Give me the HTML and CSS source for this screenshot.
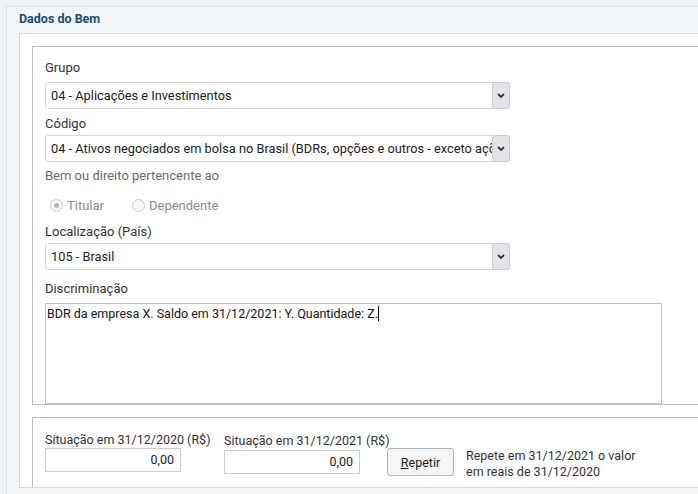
FILE: index.html
```html
<!DOCTYPE html>
<html lang="pt-BR">
<head>
<meta charset="utf-8">
<title>Dados do Bem</title>
<link rel="stylesheet" href="styles.css">
</head>
<body>
<div class="page">
  <div class="panel">
    <div class="panel-header">Dados do Bem</div>
    <div class="panel-body">
      <div class="fieldset fs-main">
        <div class="label label-first">Grupo</div>
        <div class="select">
          <span class="select-value">04 - Aplicações e Investimentos</span>
          <span class="select-arrow"><svg width="8" height="5" viewBox="0 0 8 5"><polyline points="1,1 4,4 7,1" fill="none" stroke="#333" stroke-width="1.8"/></svg></span>
        </div>
        <div class="label">Código</div>
        <div class="select">
          <span class="select-value">04 - Ativos negociados em bolsa no Brasil (BDRs, opções e outros - exceto ações)</span>
          <span class="select-arrow"><svg width="8" height="5" viewBox="0 0 8 5"><polyline points="1,1 4,4 7,1" fill="none" stroke="#333" stroke-width="1.8"/></svg></span>
        </div>
        <div class="label label-muted">Bem ou direito pertencente ao</div>
        <div class="radio-row">
          <label class="radio"><span class="radio-dot checked"></span>Titular</label>
          <label class="radio"><span class="radio-dot"></span>Dependente</label>
        </div>
        <div class="label label-loc">Localização (País)</div>
        <div class="select">
          <span class="select-value">105 - Brasil</span>
          <span class="select-arrow"><svg width="8" height="5" viewBox="0 0 8 5"><polyline points="1,1 4,4 7,1" fill="none" stroke="#333" stroke-width="1.8"/></svg></span>
        </div>
        <div class="label label-disc">Discriminação</div>
        <div class="textarea">BDR da empresa X. Saldo em 31/12/2021: Y. Quantidade: Z.<span class="caret"></span></div>
      </div>
      <div class="fieldset fs-values">
        <div class="value-col col-2020">
          <div class="value-label">Situação em 31/12/2020 (R$)</div>
          <div class="value-input">0,00</div>
        </div>
        <div class="value-col col-2021">
          <div class="value-label">Situação em 31/12/2021 (R$)</div>
          <div class="value-input">0,00</div>
        </div>
        <button class="btn" type="button"><u>R</u>epetir</button>
        <div class="hint">Repete em 31/12/2021 o valor<br>em reais de 31/12/2020</div>
      </div>
    </div>
  </div>
</div>
</body>
</html>
```
FILE: styles.css
```css
html, body {
  margin: 0;
  padding: 0;
}
body {
  background: #eef1f5;
  font-family: Roboto, "Liberation Sans", Arial, sans-serif;
  font-size: 13px;
  color: #333;
  overflow: hidden;
  width: 698px;
  height: 494px;
}
.page {
  padding: 6px 0 0 6px;
}
.panel {
  width: 740px;
  background: #f1f4f8;
  border-top: 1px solid #dde1e7;
  border-left: 1px solid #dde1e7;
  padding-left: 12px;
  height: 500px;
}
.panel-header {
  height: 26px;
  box-sizing: border-box;
  padding-top: 4px;
  line-height: 16px;
  font-size: 12.5px;
  font-weight: bold;
  color: #1f4a76;
}
.panel-body {
  background: #fff;
  border: 1px solid #d6dae1;
  height: 455px;
  box-sizing: border-box;
  overflow: hidden;
  padding: 12px 0 0 12px;
}
.fieldset {
  border: 1px solid #b9c0ca;
  padding: 13px 12px 0 12px;
}
.fs-main {
  padding-bottom: 0;
  margin-bottom: 12px;
}
.label {
  line-height: 16px;
  margin: 7px 0 3px;
  color: #333;
}
.label-first {
  margin-top: 0;
  margin-bottom: 6px;
}
.label-muted {
  color: #6b6b6b;
  margin-top: 6px;
  margin-bottom: 0;
}
.label-loc {
  margin-top: 8px;
}
.label-disc {
  margin-top: 11px;
  margin-bottom: 6px;
}
.select {
  width: 465px;
  height: 27px;
  box-sizing: border-box;
  border: 1px solid #d2d6dc;
  border-radius: 3px;
  background: #fff;
  display: flex;
  align-items: stretch;
}
.select-value {
  flex: 1;
  min-width: 0;
  overflow: hidden;
  white-space: nowrap;
  line-height: 25px;
  padding-left: 5px;
  font-size: 12.8px;
  color: #1c1c1c;
}
.select-arrow {
  width: 18px;
  margin: -1px -1px -1px 0;
  box-sizing: border-box;
  border: 1px solid #c6cad1;
  border-radius: 3px;
  background: #e2e4e9;
  display: flex;
  align-items: center;
  justify-content: center;
}
.radio-row {
  margin-top: 11px;
  height: 21px;
  display: flex;
  align-items: center;
}
.radio {
  display: inline-flex;
  align-items: center;
  color: #8c8c8c;
  margin-right: 23px;
}
.radio-dot {
  width: 13px;
  height: 13px;
  box-sizing: border-box;
  border: 1px solid #cacaca;
  border-radius: 50%;
  background: #f6f6f6;
  margin: 0 4px 0 5px;
  display: inline-flex;
  align-items: center;
  justify-content: center;
}
.radio-dot.checked::after {
  content: "";
  width: 5px;
  height: 5px;
  border-radius: 50%;
  background: #b4b4b4;
}
.textarea {
  width: 617px;
  height: 101px;
  box-sizing: border-box;
  border: 1px solid #b9c0ca;
  padding: 2px 1px;
  line-height: 16px;
  font-size: 12.5px;
  color: #151515;
}
.caret {
  display: inline-block;
  width: 1px;
  height: 15px;
  background: #000;
  vertical-align: -3px;
}
.fs-values {
  display: flex;
  align-items: flex-start;
  padding-top: 14px;
  padding-bottom: 40px;
  font-size: 12.5px;
}
.value-col {
  display: flex;
  flex-direction: column;
}
.col-2020 {
  width: 179px;
}
.col-2021 {
  width: 163px;
  padding-top: 1px;
}
.value-label {
  line-height: 16px;
  white-space: nowrap;
  color: #333;
}
.col-2021 .value-label {
  margin-bottom: 1px;
}
.value-input {
  width: 136px;
  height: 24px;
  box-sizing: border-box;
  border: 1px solid #c9cdd3;
  text-align: right;
  padding-right: 6px;
  line-height: 22px;
  color: #1c1c1c;
}
.btn {
  margin-top: 16px;
  width: 67px;
  height: 28px;
  box-sizing: border-box;
  border: 1px solid #aeb4bd;
  border-radius: 3px;
  background: #f5f6f8;
  font-family: Roboto, "Liberation Sans", Arial, sans-serif;
  font-size: 12.5px;
  color: #1c1c1c;
  padding: 0;
}
.btn u {
  text-decoration: underline;
}
.hint {
  margin-top: 16px;
  margin-left: 12px;
  line-height: 16px;
  color: #333;
}
```
